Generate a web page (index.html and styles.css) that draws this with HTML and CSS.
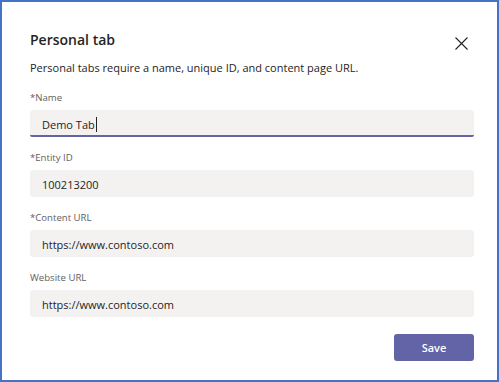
FILE: index.html
```html
<!DOCTYPE html>
<html>
<head>
<meta charset="utf-8">
<link rel="stylesheet" href="styles.css">
</head>
<body>
<div class="frame">
  <div class="dialog">
    <div class="header">
      <h1 class="title">Personal tab</h1>
      <button class="close" aria-label="Close">
        <svg width="13" height="13" viewBox="0 0 13 13"><path d="M0.5 0.5 L12.5 12.5 M12.5 0.5 L0.5 12.5" stroke="#252424" stroke-width="1.1" fill="none"/></svg>
      </button>
    </div>
    <p class="subtitle">Personal tabs require a name, unique ID, and content page URL.</p>
    <div class="fields">
      <div class="field">
        <label class="label">*Name</label>
        <div class="input focused"><span>Demo Tab</span><span class="caret"></span></div>
      </div>
      <div class="field">
        <label class="label">*Entity ID</label>
        <div class="input">100213200</div>
      </div>
      <div class="field">
        <label class="label">*Content URL</label>
        <div class="input">https://www.contoso.com</div>
      </div>
      <div class="field">
        <label class="label">Website URL</label>
        <div class="input">https://www.contoso.com</div>
      </div>
    </div>
    <div class="footer">
      <button class="save">Save</button>
    </div>
  </div>
</div>
</body>
</html>
```

FILE: styles.css
```css
* { box-sizing: border-box; }
html, body { margin: 0; padding: 0; }
body {
  width: 499px;
  height: 382px;
  font-family: "Open Sans", "Noto Sans", sans-serif;
  color: #252424;
  background: #fff;
  overflow: hidden;
}
.frame {
  width: 499px;
  height: 382px;
  border: 2px solid #4472c4;
  background: #fff;
}
.dialog {
  padding: 28px 23px 0 28px;
}
.header {
  display: flex;
  justify-content: space-between;
  align-items: flex-start;
}
.title {
  margin: 0;
  font-size: 14px;
  font-weight: 600;
  line-height: 20px;
  color: #252424;
}
.close {
  border: 0;
  background: none;
  padding: 0;
  width: 13px;
  height: 13px;
  margin-top: 7px;
  margin-right: 6px;
  display: flex;
  cursor: pointer;
}
.subtitle {
  margin: 10px 0 0;
  font-size: 11px;
  line-height: 16px;
  color: #252424;
}
.fields {
  display: flex;
  flex-direction: column;
  gap: 14px;
  margin-top: 15px;
}
.label {
  display: block;
  font-size: 9.6px;
  line-height: 13px;
  color: #616161;
  margin-bottom: 6px;
}
.input {
  height: 27px;
  background: #f3f2f1;
  border-radius: 3px;
  font-size: 11px;
  line-height: 27px;
  padding: 1px 12px 0;
  display: flex;
  align-items: center;
  color: #252424;
}
.input.focused {
  border-bottom: 2px solid #6264a7;
  border-radius: 3px 3px 2px 2px;
  padding-top: 3px;
}
.caret {
  display: inline-block;
  width: 1px;
  height: 15px;
  background: #252424;
  margin-left: 1px;
}
.footer {
  display: flex;
  justify-content: flex-end;
  margin-top: 17px;
}
.save {
  width: 80px;
  height: 27px;
  border: 0;
  border-radius: 3px;
  background: #6264a7;
  color: #fff;
  font-family: "Open Sans", "Noto Sans", sans-serif;
  font-size: 11px;
  font-weight: 600;
  padding: 0;
  cursor: pointer;
}
```
